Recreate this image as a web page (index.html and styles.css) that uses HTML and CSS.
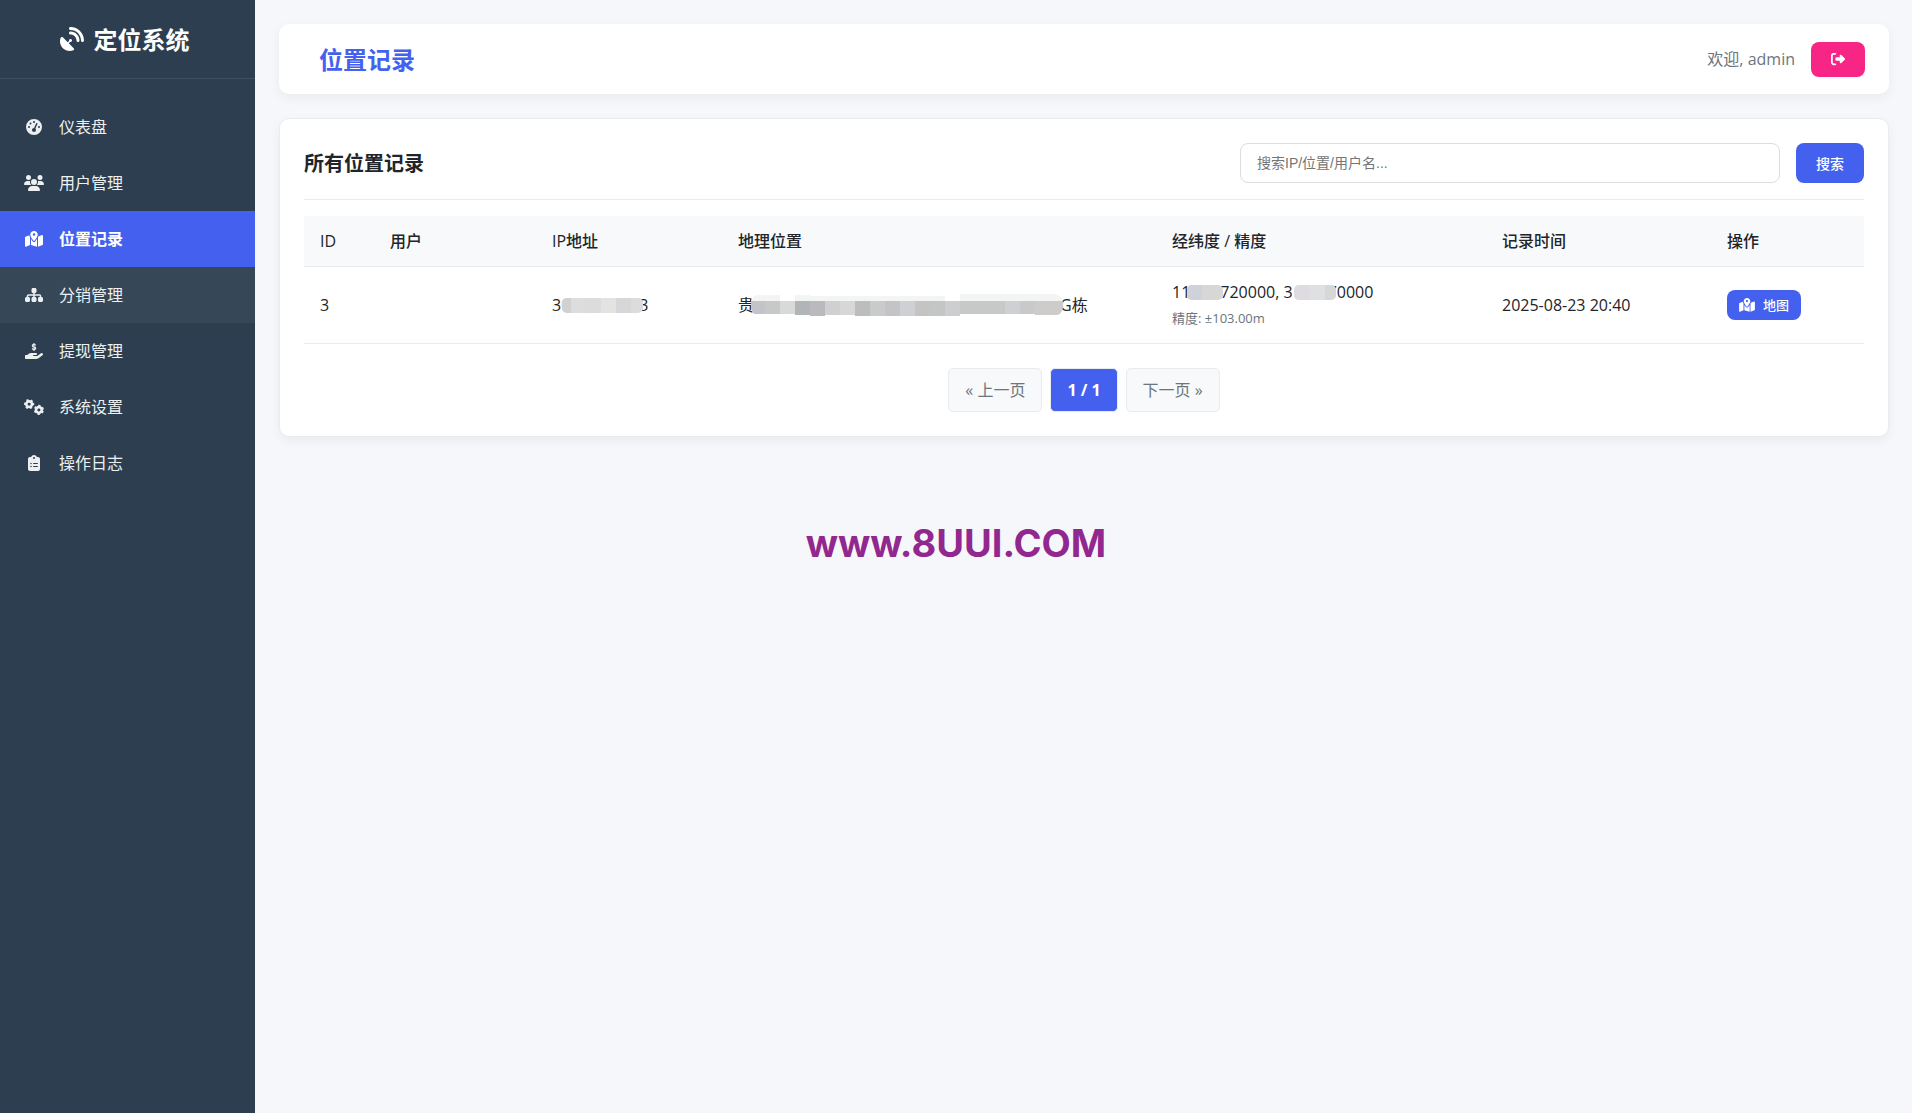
FILE: index.html
```html
<!DOCTYPE html>
<html lang="zh-CN">

<head>
    <meta charset="UTF-8">
    <meta name="viewport" content="width=device-width, initial-scale=1.0">
    <title>位置记录</title>
    <link rel="stylesheet" href="styles.css">
</head>

<body>
    <div class="layout">
        <aside class="sidebar">
            <div class="sidebar-header">
                <svg class="logo-icon" viewBox="0 0 512 512" aria-hidden="true"><path d="M192 32c0-17.7 14.3-32 32-32C383.1 0 512 128.9 512 288c0 17.7-14.3 32-32 32s-32-14.3-32-32C448 164.3 347.7 64 224 64c-17.7 0-32-14.3-32-32zM60.6 220.6L164.7 324.7l28.4-28.4c-.7-2.6-1.1-5.4-1.1-8.3c0-17.7 14.3-32 32-32s32 14.3 32 32s-14.3 32-32 32c-2.9 0-5.6-.4-8.3-1.1l-28.4 28.4L291.4 451.4c14.5 14.5 11.8 38.8-7.3 46.3C260.5 506.9 234.9 512 208 512C93.1 512 0 418.9 0 304c0-26.9 5.1-52.5 14.4-76.1c7.5-19 31.8-21.8 46.3-7.3zM224 96c106 0 192 86 192 192c0 17.7-14.3 32-32 32s-32-14.3-32-32c0-70.7-57.3-128-128-128c-17.7 0-32-14.3-32-32s14.3-32 32-32z"/></svg>
                <h2>定位系统</h2>
            </div>
            <nav class="sidebar-nav">
                <a href="#dashboard" class="nav-link">
                    <svg class="nav-icon" viewBox="0 0 512 512" aria-hidden="true"><path d="M0 256a256 256 0 1 1 512 0A256 256 0 1 1 0 256zM288 96a32 32 0 1 0 -64 0 32 32 0 1 0 64 0zM256 416c35.3 0 64-28.7 64-64c0-17.4-6.9-33.1-18.1-44.6L366 161.7c5.3-12.1-.2-26.3-12.3-31.6s-26.3 .2-31.6 12.3L257.9 288c-.6 0-1.3 0-1.9 0c-35.3 0-64 28.7-64 64s28.7 64 64 64zM176 144a32 32 0 1 0 -64 0 32 32 0 1 0 64 0zM96 288a32 32 0 1 0 0-64 32 32 0 1 0 0 64zm352-32a32 32 0 1 0 -64 0 32 32 0 1 0 64 0z"/></svg>
                    <span>仪表盘</span>
                </a>
                <a href="#users" class="nav-link">
                    <svg class="nav-icon" viewBox="0 0 640 512" aria-hidden="true"><path d="M144 0a80 80 0 1 1 0 160A80 80 0 1 1 144 0zM512 0a80 80 0 1 1 0 160A80 80 0 1 1 512 0zM0 298.7C0 239.8 47.8 192 106.7 192h42.7c15.9 0 31 3.5 44.6 9.7c-1.3 7.2-1.9 14.7-1.9 22.3c0 38.2 16.8 72.5 43.3 96c-.2 0-.4 0-.7 0H21.3C9.6 320 0 310.4 0 298.7zM405.3 320c-.2 0-.4 0-.7 0c26.6-23.5 43.3-57.8 43.3-96c0-7.6-.7-15-1.9-22.3c13.6-6.3 28.7-9.7 44.6-9.7h42.7C592.2 192 640 239.8 640 298.7c0 11.8-9.6 21.3-21.3 21.3H405.3zM224 224a96 96 0 1 1 192 0 96 96 0 1 1 -192 0zM128 485.3C128 411.7 187.7 352 261.3 352H378.7C452.3 352 512 411.7 512 485.3c0 14.7-11.9 26.7-26.7 26.7H154.7c-14.7 0-26.7-11.9-26.7-26.7z"/></svg>
                    <span>用户管理</span>
                </a>
                <a href="#locations" class="nav-link active" aria-current="page">
                    <svg class="nav-icon" viewBox="0 0 576 512" aria-hidden="true"><path id="map-icon" d="M408 120c0 54.6-73.1 151.9-105.2 192c-7.7 9.6-22 9.6-29.6 0C241.1 271.9 168 174.6 168 120C168 53.7 221.7 0 288 0s120 53.7 120 120zm8 80.4c3.5-6.9 6.7-13.8 9.6-20.6c.5-1.2 1-2.5 1.5-3.7l116-46.4C558.9 123.4 576 135 576 152V422.8c0 9.8-6 18.6-15.1 22.3L416 503V200.4zM137.6 138.3c2.4 14.1 7.2 28.3 12.8 41.5c2.9 6.8 6.1 13.7 9.6 20.6V451.8L32.9 502.7C17.1 509 0 497.4 0 480.4V209.6c0-9.8 6-18.6 15.1-22.3l122.6-49zM327.8 332c13.9-17.4 35.7-45.7 56.2-77V504.3L192 449.4V255c20.5 31.3 42.3 59.6 56.2 77c20.5 25.6 59.1 25.6 79.6 0zM288 152a40 40 0 1 0 0-80 40 40 0 1 0 0 80z"/></svg>
                    <span>位置记录</span>
                </a>
                <a href="#distribution" class="nav-link hovered">
                    <svg class="nav-icon" viewBox="0 0 576 512" aria-hidden="true"><path d="M208 80c0-26.5 21.5-48 48-48h64c26.5 0 48 21.5 48 48v64c0 26.5-21.5 48-48 48h-8v40H464c30.9 0 56 25.1 56 56v32h8c26.5 0 48 21.5 48 48v64c0 26.5-21.5 48-48 48H464c-26.5 0-48-21.5-48-48V368c0-26.5 21.5-48 48-48h8V288c0-4.4-3.6-8-8-8H312v40h8c26.5 0 48 21.5 48 48v64c0 26.5-21.5 48-48 48H256c-26.5 0-48-21.5-48-48V368c0-26.5 21.5-48 48-48h8V280H112c-4.4 0-8 3.6-8 8v32h8c26.5 0 48 21.5 48 48v64c0 26.5-21.5 48-48 48H48c-26.5 0-48-21.5-48-48V368c0-26.5 21.5-48 48-48h8V288c0-30.9 25.1-56 56-56H264V192h-8c-26.5 0-48-21.5-48-48V80z"/></svg>
                    <span>分销管理</span>
                </a>
                <a href="#withdrawals" class="nav-link">
                    <svg class="nav-icon" viewBox="0 0 576 512" aria-hidden="true"><path d="M312 24V34.5c6.4 1.2 12.6 2.7 18.2 4.2c12.8 3.4 20.4 16.6 17 29.4s-16.6 20.4-29.4 17c-10.9-2.9-21.1-4.9-30.2-5c-7.3-.1-14.7 1.7-19.4 4.4c-2.1 1.3-3.1 2.4-3.5 3c-.3 .5-.7 1.2-.7 2.8c0 .3 0 .5 0 .6c.2 .2 .9 1.2 3.3 2.6c5.8 3.5 14.4 6.2 27.4 10.1l.9 .3c11.1 3.3 25.9 7.8 37.9 15.3c13.7 8.6 26.1 22.9 26.4 44.9c.3 22.5-11.4 38.9-26.7 48.5c-6.7 4.1-13.9 7-21.3 8.8V232c0 13.3-10.7 24-24 24s-24-10.7-24-24V220.6c-9.5-2.3-18.2-5.3-25.6-7.8c-2.1-.7-4.1-1.4-6-2c-12.6-4.2-19.4-17.8-15.2-30.4s17.8-19.4 30.4-15.2c2.6 .9 5 1.7 7.3 2.5c13.6 4.6 23.4 7.9 33.9 8.3c8 .3 15.1-1.6 19.2-4.1c1.9-1.2 2.8-2.2 3.2-2.9c.4-.6 .9-1.8 .8-4.1l0-.2c0-1 0-2.1-4-4.6c-5.7-3.6-14.3-6.4-27.1-10.3l-1.9-.6c-10.8-3.2-25-7.5-36.4-14.4c-13.5-8.1-26.5-22-26.6-44.1c-.1-22.9 12.9-38.6 27.7-47.4c6.4-3.8 13.3-6.4 20.2-8.2V24c0-13.3 10.7-24 24-24s24 10.7 24 24zM568.2 336.3c13.1 17.8 9.3 42.8-8.5 55.9L433.1 485.5c-23.4 17.2-51.6 26.5-80.7 26.5H192 32c-17.7 0-32-14.3-32-32V416c0-17.7 14.3-32 32-32H68.8l44.9-36c22.7-18.2 50.9-28 80-28H272h16 64c17.7 0 32 14.3 32 32s-14.3 32-32 32H288 272c-8.8 0-16 7.2-16 16s7.2 16 16 16H392.6l119.7-88.2c17.8-13.1 42.8-9.3 55.9 8.5z"/></svg>
                    <span>提现管理</span>
                </a>
                <a href="#settings" class="nav-link">
                    <svg class="nav-icon gears" viewBox="0 0 640 512" aria-hidden="true">
                        <g transform="translate(164 164)">
                            <circle r="90"/>
                            <circle class="teeth" r="138" pathLength="12" transform="rotate(-15)"/>
                        </g>
                        <g transform="translate(476 348)">
                            <circle r="90"/>
                            <circle class="teeth" r="138" pathLength="12" transform="rotate(15)"/>
                        </g>
                    </svg>
                    <span>系统设置</span>
                </a>
                <a href="#logs" class="nav-link">
                    <svg class="nav-icon" viewBox="0 0 384 512" aria-hidden="true"><path d="M192 0c-41.8 0-77.4 26.7-90.5 64H64C28.7 64 0 92.7 0 128V448c0 35.3 28.7 64 64 64H320c35.3 0 64-28.7 64-64V128c0-35.3-28.7-64-64-64H282.5C269.4 26.7 233.8 0 192 0zm0 64a32 32 0 1 1 0 64 32 32 0 1 1 0-64zM72 272a24 24 0 1 1 48 0 24 24 0 1 1 -48 0zm104-16H304c8.8 0 16 7.2 16 16s-7.2 16-16 16H176c-8.8 0-16-7.2-16-16s7.2-16 16-16zM72 368a24 24 0 1 1 48 0 24 24 0 1 1 -48 0zm88 0c0-8.8 7.2-16 16-16H304c8.8 0 16 7.2 16 16s-7.2 16-16 16H176c-8.8 0-16-7.2-16-16z"/></svg>
                    <span>操作日志</span>
                </a>
            </nav>
        </aside>

        <main class="main-content">
            <header class="header">
                <h1>位置记录</h1>
                <div class="user-info">
                    <span>欢迎, admin</span>
                    <button type="button" class="btn btn-danger" aria-label="退出">
                        <svg viewBox="0 0 512 512" aria-hidden="true"><path d="M377.9 105.9L500.7 228.7c7.2 7.2 11.3 17.1 11.3 27.3s-4.1 20.1-11.3 27.3L377.9 406.1c-6.4 6.4-15 9.9-24 9.9c-18.7 0-33.9-15.2-33.9-33.9l0-62.1-128 0c-17.7 0-32-14.3-32-32l0-64c0-17.7 14.3-32 32-32l128 0 0-62.1c0-18.7 15.2-33.9 33.9-33.9c9 0 17.6 3.6 24 9.9zM160 96L96 96c-17.7 0-32 14.3-32 32l0 256c0 17.7 14.3 32 32 32l64 0c17.7 0 32 14.3 32 32s-14.3 32-32 32l-64 0c-53 0-96-43-96-96L0 128C0 75 43 32 96 32l64 0c17.7 0 32 14.3 32 32s-14.3 32-32 32z"/></svg>
                    </button>
                </div>
            </header>

            <section class="card">
                <div class="card-header">
                    <h3>所有位置记录</h3>
                    <form class="search-form">
                        <input type="text" class="form-control" name="search" placeholder="搜索IP/位置/用户名..." aria-label="搜索">
                        <button type="submit" class="btn btn-primary">搜索</button>
                    </form>
                </div>

                <table class="table">
                    <thead>
                        <tr>
                            <th class="col-id">ID</th>
                            <th class="col-user">用户</th>
                            <th class="col-ip">IP地址</th>
                            <th>地理位置</th>
                            <th class="col-coords">经纬度 / 精度</th>
                            <th class="col-time">记录时间</th>
                            <th class="col-action">操作</th>
                        </tr>
                    </thead>
                    <tbody>
                        <tr>
                            <td>3</td>
                            <td></td>
                            <td>
                                <div class="masked">
                                    <span>30</span>
                                    <svg class="mask mask-ip" width="81" height="15" viewBox="0 0 81 15" aria-hidden="true">
                                        <clipPath id="clip-ip"><rect width="81" height="15" rx="5"/></clipPath>
                                        <g clip-path="url(#clip-ip)">
                                            <rect width="81" height="15" fill="#dcdcdd"/>
                                            <rect width="9" height="15" fill="#d0d1d3"/>
                                            <rect x="9" width="14" height="15" fill="#dddde0"/>
                                            <rect x="39" width="15" height="15" fill="#e3e3e1"/>
                                            <rect x="54" width="15" height="15" fill="#d6d7d9"/>
                                        </g>
                                    </svg>
                                    <span>3</span>
                                </div>
                            </td>
                            <td>
                                <div class="masked">
                                    <span>贵</span>
                                    <svg class="mask" width="312" height="22" viewBox="0 0 312 22" aria-hidden="true">
                                        <clipPath id="clip-place"><rect width="312" height="22" rx="9"/></clipPath>
                                        <g clip-path="url(#clip-place)">
                                            <path fill="#f3f4f4" d="M0 1h29v6H0zM44 1h15v6H44zM59 2h135v5H59zM209 0h103v7H209z"/>
                                            <rect y="7" width="14" height="13" fill="#c3c3c9"/>
                                            <rect x="14" y="7" width="15" height="13" fill="#c7c8c8"/>
                                            <rect x="29" y="7" width="15" height="13" fill="#d8dad9"/>
                                            <rect x="44" y="7" width="15" height="14" fill="#b1b5b7"/>
                                            <rect x="59" y="7" width="15" height="15" fill="#bab9bd"/>
                                            <rect x="74" y="7" width="15" height="14" fill="#cfd0d2"/>
                                            <rect x="89" y="7" width="15" height="14" fill="#d7d7d7"/>
                                            <rect x="104" y="7" width="15" height="15" fill="#bcbebd"/>
                                            <rect x="119" y="7" width="15" height="15" fill="#c9caca"/>
                                            <rect x="134" y="7" width="15" height="15" fill="#c4c3c5"/>
                                            <rect x="149" y="7" width="15" height="15" fill="#cfd0d4"/>
                                            <rect x="164" y="7" width="15" height="15" fill="#c6c4c3"/>
                                            <rect x="179" y="7" width="15" height="15" fill="#c4c6c5"/>
                                            <rect x="194" y="7" width="15" height="15" fill="#cdced0"/>
                                            <rect x="209" y="7" width="45" height="13" fill="#c7c9c9"/>
                                            <rect x="254" y="7" width="15" height="13" fill="#cfd0d3"/>
                                            <rect x="269" y="7" width="15" height="13" fill="#c8c9cb"/>
                                            <rect x="284" y="7" width="28" height="14" fill="#ceccca"/>
                                        </g>
                                    </svg>
                                    <span>G栋</span>
                                </div>
                            </td>
                            <td>
                                <div class="masked">
                                    <span>11</span>
                                    <svg class="mask" width="36" height="15" viewBox="0 0 36 15" aria-hidden="true">
                                        <clipPath id="clip-lng"><rect width="36" height="15" rx="5"/></clipPath>
                                        <g clip-path="url(#clip-lng)">
                                            <rect width="36" height="15" fill="#d7d7d8"/>
                                            <rect width="15" height="15" fill="#d0d2d9"/>
                                        </g>
                                    </svg>
                                    <span>720000, 3</span>
                                    <svg class="mask mask-lat" width="42" height="15" viewBox="0 0 42 15" aria-hidden="true">
                                        <clipPath id="clip-lat"><rect width="42" height="15" rx="5"/></clipPath>
                                        <g clip-path="url(#clip-lat)">
                                            <rect width="42" height="15" fill="#dfe0e2"/>
                                            <rect width="16" height="15" fill="#dedce0"/>
                                            <rect x="31" width="11" height="15" fill="#d7d7d7"/>
                                        </g>
                                    </svg>
                                    <span>70000</span>
                                </div>
                                <small class="text-muted">精度: ±103.00m</small>
                            </td>
                            <td>2025-08-23 20:40</td>
                            <td>
                                <a href="#map" class="btn btn-primary btn-sm">
                                    <svg viewBox="0 0 576 512" aria-hidden="true"><use href="#map-icon"/></svg>
                                    地图
                                </a>
                            </td>
                        </tr>
                    </tbody>
                </table>

                <nav class="pagination" aria-label="分页">
                    <a href="#prev" class="page-link">« 上一页</a>
                    <span class="page-link current">1 / 1</span>
                    <a href="#next" class="page-link">下一页 »</a>
                </nav>
            </section>
        </main>
    </div>
    <div class="site-mark">www.8UUI.COM</div>
</body>

</html>
```
FILE: styles.css
```css
:root {
    --primary: #4361ee;
    --danger: #f72585;
    --sidebar: #2c3e50;
    --bg: #f5f7fb;
    --text: #212529;
    --muted: #6c757d;
    --border: #e9ecef;
}

* {
    box-sizing: border-box;
}

body {
    margin: 0;
    font-family: "Open Sans", "Noto Sans CJK SC", sans-serif;
    font-size: 16px;
    line-height: 26px;
    color: var(--text);
    background: var(--bg);
}

h1,
h2,
h3 {
    margin: 0;
    padding-top: 2px;
}

a {
    text-decoration: none;
}

svg {
    fill: currentColor;
}

.layout {
    display: flex;
    min-height: 100vh;
}

/* Sidebar */
.sidebar {
    flex: 0 0 255px;
    background: var(--sidebar);
    color: #fff;
}

.sidebar-header {
    display: flex;
    justify-content: center;
    align-items: center;
    gap: 10px;
    padding: 20px 30px 20px 24px;
    border-bottom: 1px solid rgba(255, 255, 255, 0.1);
}

.sidebar-header h2 {
    font-size: 24px;
    line-height: 36px;
}

.logo-icon {
    width: 24px;
    height: 24px;
}

.sidebar-nav {
    padding: 20px 0;
}

.nav-link {
    display: flex;
    align-items: center;
    gap: 15px;
    padding: 15px 24px;
    color: #ecf0f1;
}

.nav-link:hover,
.nav-link.hovered {
    background: rgba(255, 255, 255, 0.05);
}

.nav-link.active {
    background: var(--primary);
    color: #fff;
    font-weight: bold;
}

.nav-icon {
    width: 20px;
    height: 16px;
}

.gears circle {
    fill: none;
    stroke: currentColor;
    stroke-width: 84;
}

.gears .teeth {
    stroke-width: 50;
    stroke-dasharray: 1 1;
}

/* Main content */
.main-content {
    flex: 1;
    min-width: 0;
    padding: 24px 23px 24px 24px;
}

.header {
    display: flex;
    justify-content: space-between;
    align-items: center;
    margin-bottom: 24px;
    padding: 16px 24px 16px 40px;
    background: #fff;
    border-radius: 10px;
    box-shadow: 0 4px 12px rgba(0, 0, 0, 0.05);
}

.header h1 {
    font-size: 24px;
    line-height: 36px;
    color: var(--primary);
}

.user-info {
    display: flex;
    align-items: center;
    gap: 16px;
    color: var(--muted);
}

.btn {
    display: inline-flex;
    align-items: center;
    justify-content: center;
    border: none;
    border-radius: 8px;
    color: #fff;
    font-family: inherit;
    font-size: 14px;
    font-weight: 500;
    cursor: pointer;
}

.btn-primary {
    height: 40px;
    padding: 0 20px;
    background: var(--primary);
}

.btn-danger {
    height: 35px;
    padding: 0 20px;
    background: var(--danger);
}

.btn-danger svg {
    width: 14px;
    height: 14px;
}

.btn-sm {
    height: 30px;
    padding: 0 12px;
    gap: 8px;
    font-size: 13px;
    vertical-align: middle;
}

.btn-sm svg {
    width: 16px;
    height: 14px;
}

.card {
    padding: 24px;
    background: #fff;
    border: 1px solid var(--border);
    border-radius: 10px;
    box-shadow: 0 4px 12px rgba(0, 0, 0, 0.05);
}

.card-header {
    display: flex;
    justify-content: space-between;
    align-items: center;
    margin-bottom: 16px;
    padding-bottom: 16px;
    border-bottom: 1px solid var(--border);
}

.card-header h3 {
    font-size: 20px;
}

.search-form {
    display: flex;
    gap: 16px;
    width: 40%;
}

.form-control {
    flex: 1;
    min-width: 0;
    height: 40px;
    padding: 0 16px;
    border: 1px solid #ddd;
    border-radius: 8px;
    font-family: "Liberation Sans", "Noto Sans CJK SC", sans-serif;
    font-size: 14px;
}

/* Records table, the place column takes the space that is left */
.table {
    width: 100%;
    table-layout: fixed;
    border-collapse: separate;
    border-spacing: 0;
}

.table th,
.table td {
    padding: 12px 16px;
    text-align: left;
    border-bottom: 1px solid var(--border);
}

.table th {
    background: #f8f9fa;
    font-weight: 500;
}

.col-id {
    width: 70px;
}

.col-user {
    width: 162px;
}

.col-ip {
    width: 186px;
}

.col-coords {
    width: 330px;
}

.col-time {
    width: 225px;
}

.col-action {
    width: 153px;
}

.masked {
    display: flex;
    align-items: center;
    white-space: nowrap;
}

.mask {
    position: relative;
    flex: none;
    margin: 0 -3px;
}

.mask-ip {
    margin: 0 -4px 0 -8px;
}

.mask-lat {
    margin: 0 -8px 0 1px;
}

.text-muted {
    display: block;
    font-size: 13px;
    color: var(--muted);
}

/* Pagination */
.pagination {
    display: flex;
    justify-content: center;
    gap: 8px;
    margin-top: 24px;
}

.page-link {
    padding: 8px 16px;
    background: #f8f9fa;
    border: 1px solid var(--border);
    border-radius: 5px;
    color: var(--muted);
}

.page-link.current {
    background: var(--primary);
    color: #fff;
    font-weight: bold;
}

.site-mark {
    position: absolute;
    top: 521px;
    left: 0;
    right: 0;
    font-family: Inter, sans-serif;
    font-size: 38px;
    line-height: 44px;
    font-weight: bold;
    text-align: center;
    color: #92278f;
    pointer-events: none;
}
```
